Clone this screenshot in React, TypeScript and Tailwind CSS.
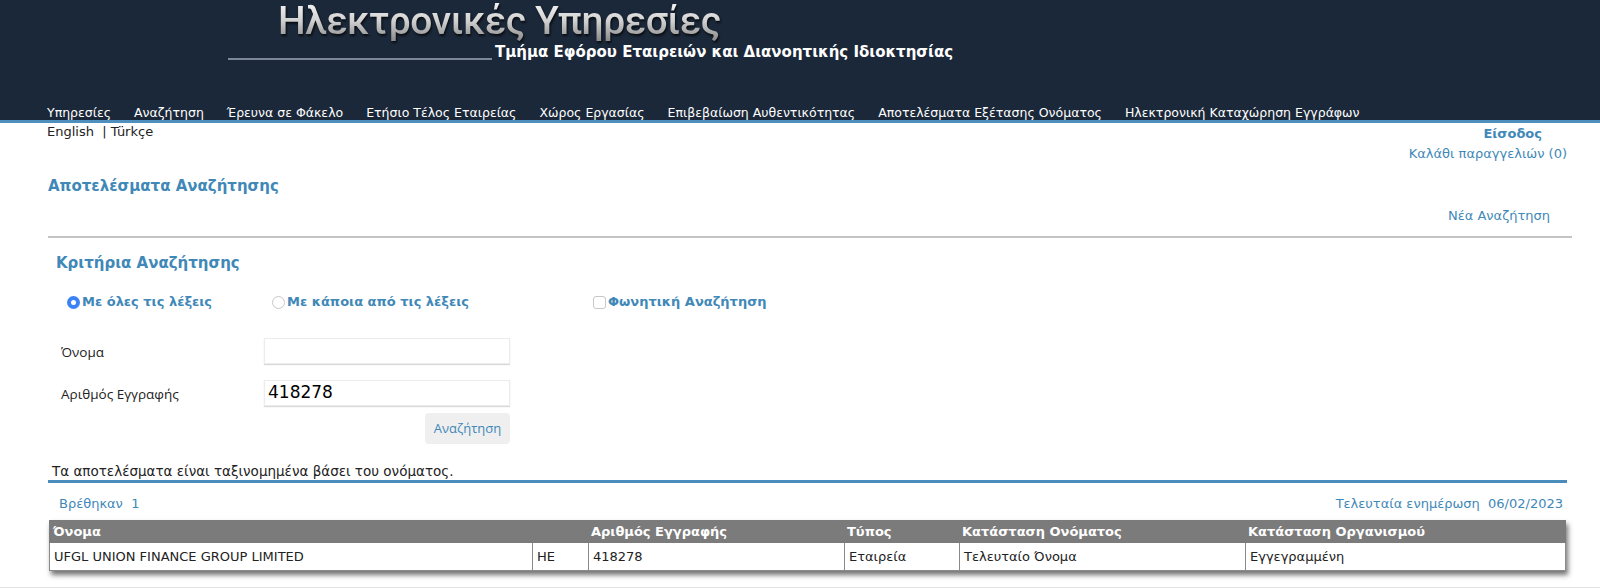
import React from "react";

const NAV = [
  "Υπηρεσίες",
  "Αναζήτηση",
  "Έρευνα σε Φάκελο",
  "Ετήσιο Τέλος Εταιρείας",
  "Χώρος Εργασίας",
  "Επιβεβαίωση Αυθεντικότητας",
  "Αποτελέσματα Εξέτασης Ονόματος",
  "Ηλεκτρονική Καταχώρηση Εγγράφων",
];

const COLS = [
  { label: "Όνομα", w: "w-[482px]" },
  { label: "", w: "w-[56px]" },
  { label: "Αριθμός Εγγραφής", w: "w-[256px]" },
  { label: "Τύπος", w: "w-[115px]" },
  { label: "Κατάσταση Ονόματος", w: "w-[286px]" },
  { label: "Κατάσταση Οργανισμού", w: "flex-1" },
];

const ROW = ["UFGL UNION FINANCE GROUP LIMITED", "HE", "418278", "Εταιρεία", "Τελευταίο Όνομα", "Εγγεγραμμένη"];

export default function App() {
  return (
    <div className="h-[588px] w-[1600px] overflow-hidden bg-white font-['DejaVu_Sans',sans-serif] text-[13px] text-[#222]">
      {/* header */}
      <div className="h-[123px] bg-[#1b2839] border-b-[3px] border-[#4f8fbd] flex flex-col">
        <div className="flex flex-col pl-[228px] pt-[1px]">
          <div className="pl-[50px] font-['Roboto',sans-serif] font-medium text-[39px] leading-[40px] tracking-[-0.5px] bg-gradient-to-b from-[#f6f6f6] via-[#d0d0d0] to-[#8a8a8a] bg-clip-text text-transparent [filter:drop-shadow(1px_2px_1px_rgba(0,0,0,0.7))]">
            Ηλεκτρονικές Υπηρεσίες
          </div>
          <div className="flex items-end mt-[2px]">
            <div className="w-[264px] h-[2px] bg-[#7d8896] mb-[1px]" />
            <div className="ml-[3px] font-bold text-[15px] leading-[18px] text-white">
              Τμήμα Εφόρου Εταιρειών και Διανοητικής Ιδιοκτησίας
            </div>
          </div>
        </div>
        <div className="mt-auto flex gap-[23px] pl-[47px] pb-0 text-[12.5px] text-white leading-[15px]">
          {NAV.map((n) => (
            <span key={n}>{n}</span>
          ))}
        </div>
      </div>

      {/* lang / login row */}
      <div className="flex justify-between pl-[47px] pr-[33px] leading-[16px]">
        <div className="pt-[1px]">English &nbsp;| Türkçe</div>
        <div className="flex flex-col items-end pt-[3px] text-[#3f88b8]">
          <span className="font-bold pr-[25px]">Είσοδος</span>
          <span className="mt-[4px]">Καλάθι παραγγελιών (0)</span>
        </div>
      </div>

      <div className="pl-[48px] pr-[28px]">
        <h1 className="mt-[15px] font-bold text-[15px] leading-[18px] text-[#3f88b8]">Αποτελέσματα Αναζήτησης</h1>
        <div className="flex justify-end pr-[22px] mt-[13px] text-[#3f88b8] leading-[16px]">Νέα Αναζήτηση</div>
        <div className="mt-[12px] h-[2px] bg-[#c4c4c4]" />

        {/* criteria */}
        <h2 className="mt-[16px] pl-[8px] font-bold text-[15px] leading-[18px] text-[#3f88b8]">Κριτήρια Αναζήτησης</h2>
        <div className="mt-[22px] flex items-center pl-[19px] font-bold text-[#3f88b8] leading-[16px]">
          <div className="flex items-center w-[205px]">
            <span className="w-[13px] h-[13px] rounded-full bg-[#3b82f6] flex items-center justify-center mr-[2px]">
              <span className="w-[5px] h-[5px] rounded-full bg-white" />
            </span>
            Με όλες τις λέξεις
          </div>
          <div className="flex items-center w-[321px]">
            <span className="w-[13px] h-[13px] rounded-full border border-[#c8c8c8] bg-white mr-[2px]" />
            Με κάποια από τις λέξεις
          </div>
          <div className="flex items-center">
            <span className="w-[13px] h-[13px] rounded-[3px] border border-[#c8c8c8] bg-white mr-[2px]" />
            Φωνητική Αναζήτηση
          </div>
        </div>

        <div className="mt-[28px] flex flex-col gap-[16px] pl-[13px] font-['Open_Sans',sans-serif] text-[13.5px]">
          <div className="flex items-center">
            <span className="w-[203px] pt-[3px]">Όνομα</span>
            <div className="w-[246px] h-[26px] border border-[#ececec] shadow-[0_1px_1px_rgba(0,0,0,0.15)] bg-white" />
          </div>
          <div className="flex items-center">
            <span className="w-[203px] pt-[3px]">Αριθμός Εγγραφής</span>
            <div className="w-[246px] h-[26px] border border-[#ececec] shadow-[0_1px_1px_rgba(0,0,0,0.15)] bg-white flex items-center px-[3px] font-['DejaVu_Sans',sans-serif] text-[17px] text-black">
              418278
            </div>
          </div>
        </div>
        <div className="flex pl-[377px] mt-[7px]">
          <div className="w-[85px] h-[31px] rounded-[4px] bg-[#efefef] flex items-center justify-center font-['Open_Sans',sans-serif] text-[#3f88b8]">
            Αναζήτηση
          </div>
        </div>

        <div className="mt-[19px] pl-[4px] pr-[5px] text-[13.5px] leading-[16px]">Τα αποτελέσματα είναι ταξινομημένα βάσει του ονόματος.</div>
        <div className="mt-[1px] mr-[5px] h-[3px] bg-[#4a8dbc]" />

        <div className="mt-[13px] flex justify-between pl-[11px] pr-[9px] text-[#3f88b8] leading-[16px]">
          <span>Βρέθηκαν &nbsp;1</span>
          <span>Τελευταία ενημέρωση &nbsp;06/02/2023</span>
        </div>

        {/* table */}
        <div className="mt-[8px] ml-[1px] mr-[6px] shadow-[2px_4px_5px_rgba(0,0,0,0.55)]">
          <div className="flex h-[23px] bg-[#7b7b7b] text-white font-bold items-center">
            {COLS.map((c, i) => (
              <div key={i} className={`${c.w} px-[4px]`}>{c.label}</div>
            ))}
          </div>
          <div className="flex h-[28px] bg-white items-center border border-t-0 border-[#8a8a8a]">
            {ROW.map((v, i) => (
              <div
                key={i}
                className={`${COLS[i].w} h-full flex items-center px-[4px] ${i > 0 ? "border-l border-[#8a8a8a]" : ""}`}
              >
                {v}
              </div>
            ))}
          </div>
        </div>
      </div>
      <div className="mt-[16px] h-[2px] bg-[#e4e4e4]" />
    </div>
  );
}
